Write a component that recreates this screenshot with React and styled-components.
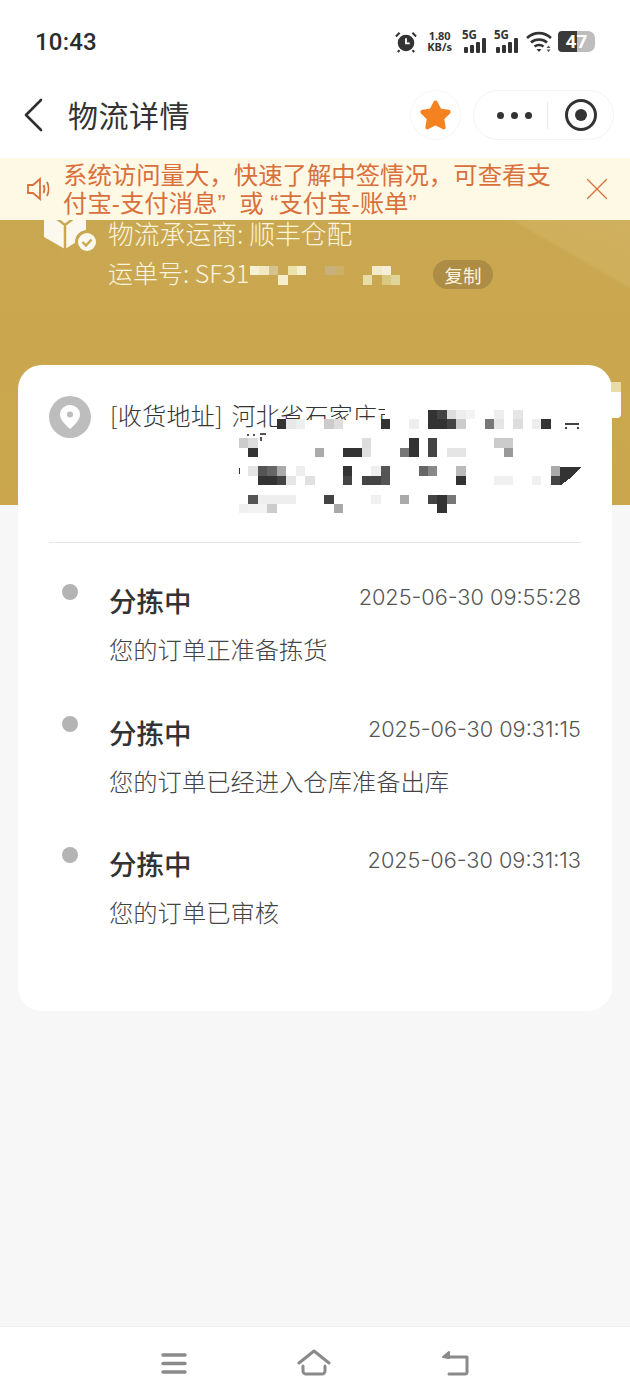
import React from 'react';
import styled, { createGlobalStyle } from 'styled-components';
import { Star, X } from 'lucide-react';

const GlobalStyle = createGlobalStyle`
  html, body {
    margin: 0;
    padding: 0;
    background: #f7f7f7;
  }
  * {
    box-sizing: border-box;
  }
`;

const Page = styled.div`
  width: 630px;
  height: 1400px;
  display: flex;
  flex-direction: column;
  overflow: hidden;
  background: #f7f7f7;
  font-family: 'Noto Sans CJK SC', 'Noto Sans', sans-serif;
  color: #333;
`;

const StatusBar = styled.div`
  height: 75px;
  flex: none;
  display: flex;
  align-items: center;
  justify-content: space-between;
  padding: 8px 35px 0 35px;
  background: #fff;
`;

const Clock = styled.div`
  font-family: Roboto, sans-serif;
  font-size: 24px;
  font-weight: 500;
  letter-spacing: 0.2px;
  color: #2c2c2c;
`;

const StatusIcons = styled.div`
  display: flex;
  align-items: center;
  gap: 6px;
`;

const NetSpeed = styled.div`
  display: flex;
  flex-direction: column;
  align-items: center;
  gap: 1px;
  margin: 0 4px;
  font-family: 'Noto Sans', sans-serif;
  font-size: 11px;
  line-height: 10px;
  font-weight: 700;
  color: #333;
`;

const SignalWrap = styled.div`
  position: relative;
  width: 26px;
  height: 22px;
`;

const SignalLabel = styled.span`
  position: absolute;
  left: 0;
  top: -2px;
  font-family: 'Noto Sans', sans-serif;
  font-size: 11.5px;
  line-height: 12px;
  font-weight: 700;
  color: #333;
`;

const Battery = styled.div`
  width: 37px;
  height: 21px;
  display: flex;
  align-items: center;
  justify-content: center;
  border-radius: 4px 7px 7px 4px;
  background: linear-gradient(90deg, #3a3a3a 0 52%, #bdbdbd 52% 100%);
  font-family: Roboto, sans-serif;
  font-size: 19px;
  font-weight: 700;
  color: #fff;
`;

const NavBar = styled.div`
  height: 83px;
  flex: none;
  display: flex;
  align-items: center;
  padding: 0 16px 3px 24px;
  background: #fff;
`;

const BackIcon = styled.svg`
  flex: none;
  margin-right: 24px;
`;

const NavTitle = styled.div`
  flex: 1;
  margin-top: -2px;
  font-size: 30px;
  letter-spacing: 0.5px;
  color: #333;
`;

const RoundButton = styled.div`
  width: 51px;
  height: 50px;
  display: flex;
  align-items: center;
  justify-content: center;
  margin-right: 12px;
  border: 1px solid #f6f6f6;
  border-radius: 50%;
`;

const Capsule = styled.div`
  width: 141px;
  height: 50px;
  display: flex;
  align-items: center;
  border: 1px solid #f4f4f4;
  border-radius: 25px;
`;

const CapsuleSide = styled.div`
  flex: 1;
  display: flex;
  align-items: center;
  justify-content: center;
  gap: 7px;
`;

const DotsSide = styled(CapsuleSide)`
  padding-left: 8px;
`;

const Dot = styled.span`
  width: 7px;
  height: 7px;
  border-radius: 50%;
  background: #333;
`;

const CapsuleDivider = styled.div`
  width: 1px;
  height: 27px;
  background: #e8e8e8;
`;

const Target = styled.div`
  width: 32px;
  height: 32px;
  display: flex;
  align-items: center;
  justify-content: center;
  border: 3px solid #333;
  border-radius: 50%;
  &::after {
    content: '';
    width: 12px;
    height: 12px;
    border-radius: 50%;
    background: #333;
  }
`;

const Banner = styled.div`
  position: relative;
  height: 347px;
  flex: none;
  padding: 56px 0 0 44px;
  background:
    linear-gradient(30deg, rgba(255, 240, 190, 0) 81.4%, rgba(255, 240, 190, 0.1) 82%, rgba(255, 240, 190, 0.15) 100%),
    linear-gradient(180deg, #c9a852 0%, #cba64c 100%);
`;

const Notice = styled.div`
  position: absolute;
  left: 0;
  right: 0;
  top: 0;
  height: 62px;
  display: flex;
  align-items: center;
  padding: 0 14px 0 25px;
  background: #fef9e5;
  color: #d9703c;
`;

/* Liberation first so the curly quotes come out narrow, Han falls through to Noto */
const NoticeText = styled.div`
  width: 490px;
  margin: 0 auto 0 12px;
  padding-top: 1px;
  font-family: 'Liberation Sans', 'Noto Sans CJK SC', sans-serif;
  font-size: 24.400px;
  line-height: 28px;
`;

const Carrier = styled.div`
  display: flex;
  gap: 16px;
`;

const CarrierIcon = styled.div`
  width: 48px;
  height: 36px;
  flex: none;
`;

const IconSvg = styled.svg`
  overflow: visible;
`;

const CarrierText = styled.div`
  flex: 1;
  font-size: 25.800px;
  font-weight: 300;
  line-height: 38px;
  color: #fbf4df;
`;

const WaybillRow = styled.div`
  position: relative;
  display: flex;
  align-items: center;
  font-size: 25px;
  line-height: 38px;
  margin-top: 1px;
`;

const CopyTag = styled.div`
  position: absolute;
  left: 325px;
  top: 7px;
  width: 60px;
  height: 29px;
  display: flex;
  align-items: center;
  justify-content: center;
  border-radius: 15px;
  background: #ad8d45;
  font-size: 18.500px;
  font-weight: 400;
  color: #fbf4df;
`;

const Card = styled.div`
  position: relative;
  flex: none;
  width: 594px;
  height: 646px;
  margin: -140px 0 0 18px;
  padding: 0 31px;
  border-radius: 24px;
  background: #fff;
`;

const CardEdge = styled.div`
  position: absolute;
  right: -9px;
  top: 17px;
  width: 10px;
  height: 36px;
  border-radius: 0 0 4px 0;
  background: linear-gradient(180deg, #e9dba6 0 10px, #fff 10px);
`;

const AddressRow = styled.div`
  position: relative;
  height: 178px;
  display: flex;
  padding-top: 31px;
  border-bottom: 1px solid #e6e6e6;
`;

const PinCircle = styled.div`
  width: 42px;
  height: 42px;
  flex: none;
  display: flex;
  align-items: center;
  justify-content: center;
  border-radius: 50%;
  background: #bdbdbd;
`;

const AddressText = styled.div`
  margin-left: 19px;
  font-size: 24px;
  font-weight: 300;
  letter-spacing: 0.3px;
  word-spacing: 3px;
  line-height: 38px;
  color: #333;
  white-space: nowrap;
`;

const Mosaic = styled.svg`
  position: absolute;
  display: block;
  overflow: visible;
  shape-rendering: crispEdges;
`;

const AddressMosaic = styled(Mosaic)`
  left: 190px;
  top: 39px;
`;

const WaybillMosaic = styled(Mosaic)`
  left: 142px;
  top: 13px;
`;

const Timeline = styled.div`
  display: flex;
  flex-direction: column;
  padding-top: 30px;
`;

const Step = styled.div`
  position: relative;
  height: 131.500px;
  padding-left: 60px;
`;

const StepDot = styled.span`
  position: absolute;
  left: 13px;
  top: 11px;
  width: 16px;
  height: 16px;
  border-radius: 50%;
  background: #b4b4b4;
`;

const StepHead = styled.div`
  display: flex;
  align-items: flex-start;
  justify-content: space-between;
`;

const StepTitle = styled.div`
  margin-top: 7px;
  font-size: 27.500px;
  line-height: 40px;
  font-weight: 500;
  color: #333;
`;

const StepTime = styled.div`
  margin-top: 4px;
  font-family: Inter, 'Noto Sans', sans-serif;
  font-size: 21.700px;
  font-weight: 300;
  line-height: 40px;
  color: #555;
`;

const StepDesc = styled.div`
  margin-top: 11px;
  font-size: 24.300px;
  font-weight: 300;
  line-height: 36px;
  color: #444;
`;

const Spacer = styled.div`
  flex: 1;
`;

const BottomBar = styled.div`
  height: 74px;
  flex: none;
  display: flex;
  align-items: center;
  justify-content: center;
  gap: 110px;
  border-top: 1px solid #eee;
  background: #fff;
`;

const addressCells = [
  [0, 20, '#333'], [0, 21, '#444'], [0, 22, '#ddd'], [0, 23, '#eee'], [0, 24, '#f3f3f3'], [0, 27, '#eee'], [0, 29, '#e5e5e5'],
  [1, 4, '#333'], [1, 5, '#e8e8e8'], [1, 6, '#eee'], [1, 9, '#ccc'], [1, 10, '#ddd'], [1, 15, '#333'], [1, 18, '#eee'],
  [1, 20, '#333'], [1, 21, '#333'], [1, 22, '#444'], [1, 23, '#ccc'], [1, 26, '#777'], [1, 27, '#e5e5e5'], [1, 29, '#ddd'],
  [1, 31, '#eee'], [1, 32, '#333'],
  [3, 0, '#ccc'], [3, 1, '#ddd'], [3, 13, '#ddd'], [3, 18, '#333'], [3, 20, '#444'], [3, 27, '#ccc'], [3, 28, '#ccc'],
  [4, 1, '#333'], [4, 8, '#aaa'], [4, 11, '#333'], [4, 12, '#333'], [4, 13, '#e0e0e0'], [4, 17, '#777'], [4, 18, '#333'],
  [4, 20, '#444'], [4, 22, '#e5e5e5'], [4, 23, '#e5e5e5'], [4, 28, '#999'],
  [6, 1, '#e5e5e5'], [6, 2, '#555'], [6, 3, '#666'], [6, 4, '#aaa'], [6, 6, '#eee'], [6, 11, '#333'], [6, 14, '#eee'],
  [6, 15, '#555'], [6, 19, '#666'], [6, 20, '#888'], [6, 23, '#bbb'], [6, 33, '#aaa'],
  [7, 2, '#333'], [7, 3, '#333'], [7, 4, '#444'], [7, 5, '#e5e5e5'], [7, 7, '#e0e0e0'], [7, 11, '#444'], [7, 13, '#444'],
  [7, 14, '#444'], [7, 15, '#555'], [7, 23, '#333'], [7, 27, '#f0f0f0'], [7, 28, '#f0f0f0'], [7, 31, '#f0f0f0'],
  [7, 33, '#444'],
  [9, 1, '#555'], [9, 2, '#eee'], [9, 3, '#eee'], [9, 4, '#eee'], [9, 5, '#eee'], [9, 9, '#444'], [9, 14, '#f0f0f0'],
  [9, 17, '#aaa'], [9, 20, '#444'], [9, 21, '#333'], [9, 22, '#777'],
  [10, 0, '#f0f0f0'], [10, 1, '#f3f3f3'], [10, 2, '#f3f3f3'], [10, 3, '#ccc'], [10, 10, '#aaa'], [10, 21, '#333'],
];

const waybillCells = [
  [0, 0, '#f6f1d4'], [0, 1, '#f2e9c2'], [0, 2, '#d6c28e'], [1, 3, '#f5efd0'], [0, 4, '#ece3a8'], [0, 5, '#f5f0d0'],
  [0, 8, '#c8b07c'], [0, 9, '#cdb068'], [0, 13, '#f2eac8'], [0, 14, '#f5efd8'], [1, 12, '#e8dca8'], [1, 14, '#d8c880'],
  [1, 15, '#e0d498'],
];

const steps = [
  { time: '2025-06-30 09:55:28', desc: '您的订单正准备拣货' },
  { time: '2025-06-30 09:31:15', desc: '您的订单已经进入仓库准备出库' },
  { time: '2025-06-30 09:31:13', desc: '您的订单已审核' },
];

function SignalIcon() {
  return (
    <SignalWrap>
      <SignalLabel>5G</SignalLabel>
      <svg width="26" height="22" viewBox="0 0 26 22">
        <rect x="2" y="16" width="4" height="6" rx="1" fill="#333" />
        <rect x="8" y="14" width="4" height="8" rx="1" fill="#333" />
        <rect x="14" y="11" width="4" height="11" rx="1" fill="#333" />
        <rect x="20" y="7" width="4" height="15" rx="1" fill="#333" />
      </svg>
    </SignalWrap>
  );
}

function App() {
  return (
    <Page>
      <GlobalStyle />
      <StatusBar>
        <Clock>10:43</Clock>
        <StatusIcons>
          <svg width="22" height="24" viewBox="0 0 24 24">
            <circle cx="12" cy="13" r="9" fill="#333" />
            <path d="M12 8v5.500h4" stroke="#fff" strokeWidth="2" fill="none" />
            <path d="M1 6l4-4M23 6l-4-4M5 21l-2 2M19 21l2 2" stroke="#333" strokeWidth="2.200" />
          </svg>
          <NetSpeed>
            <span>1.80</span>
            <span>KB/s</span>
          </NetSpeed>
          <SignalIcon />
          <SignalIcon />
          <svg width="26" height="22" viewBox="0 0 26 22">
            <path d="M1 7c7-6.500 17-6.500 24 0M5 11.500c4.500-4 11.500-4 16 0M8.500 15.500c2.500-2 6.500-2 9 0" stroke="#333" strokeWidth="2.600" fill="none" />
            <path d="M10.500 18h5L13 21z" fill="#333" />
            <path d="M20.500 17l2-2.500 2 2.500zM20.500 18.500l2 2.500 2-2.500z" fill="#555" />
          </svg>
          <Battery>47</Battery>
        </StatusIcons>
      </StatusBar>

      <NavBar>
        <BackIcon width="20" height="34" viewBox="0 0 20 34" fill="none" stroke="#2f2f2f" strokeWidth="2.600" strokeLinecap="round" strokeLinejoin="round">
          <path d="M17 2L2 17l15 15" />
        </BackIcon>
        <NavTitle>物流详情</NavTitle>
        <RoundButton>
          <Star size={33} fill="#f58220" color="#f58220" strokeWidth={2} />
        </RoundButton>
        <Capsule>
          <DotsSide>
            <Dot />
            <Dot />
            <Dot />
          </DotsSide>
          <CapsuleDivider />
          <CapsuleSide>
            <Target />
          </CapsuleSide>
        </Capsule>
      </NavBar>

      <Banner>
        <Carrier>
          <CarrierIcon>
            <IconSvg width="48" height="36" viewBox="0 0 48 36">
              <path d="M0 0h42v22L21 35 0 23z" fill="#fbf8ee" />
              <path d="M4 -2l17 13 17-13M21 11v24" stroke="#c9a852" strokeWidth="2.500" fill="none" />
              <circle cx="43" cy="28" r="12" fill="#c9a852" />
              <circle cx="43" cy="28" r="9" fill="#fbf8ee" />
              <path d="M38.500 28l3.500 3.500 5.500-6" stroke="#c9a852" strokeWidth="2.400" fill="none" />
            </IconSvg>
          </CarrierIcon>
          <CarrierText>
            <div>物流承运商: 顺丰仓配</div>
            <WaybillRow>
              <span>运单号: SF31</span>
              <WaybillMosaic width="152" height="19" viewBox="0 0 152 19">
                {waybillCells.map(([row, col, fill]) => (
                  <rect key={`${row}-${col}`} x={col * 9.4} y={row * 9.4} width="9.4" height="9.4" fill={fill} />
                ))}
              </WaybillMosaic>
              <CopyTag>复制</CopyTag>
            </WaybillRow>
          </CarrierText>
        </Carrier>
        <Notice>
          <svg width="26" height="24" viewBox="0 0 26 24" fill="none" stroke="#d9703c" strokeWidth="1.800">
            <path d="M3 8h5l7-6v20l-7-6H3z" />
            <path d="M18.500 8c1.200 2.500 1.200 5.500 0 8M22 5c2 4 2 10 0 14" />
          </svg>
          <NoticeText>
            {'系统访问量大，快速了解中签情况，可查看支付宝-支付消息”\u00a0\u00a0或\u00a0“支付宝-账单”'}
          </NoticeText>
          <X size={38} strokeWidth={0.8} color="#d9703c" />
        </Notice>
      </Banner>

      <Card>
        <CardEdge />
        <AddressRow>
          <PinCircle>
            <svg width="20" height="24" viewBox="0 0 20 24">
              <path d="M10 0C4.500 0 0 4.300 0 9.600 0 15 6 20.500 10 24c4-3.500 10-9 10-14.400C20 4.300 15.500 0 10 0z" fill="#fff" />
              <circle cx="10" cy="9.500" r="3" fill="#bdbdbd" />
            </svg>
          </PinCircle>
          <AddressText>[收货地址] 河北省石家庄市</AddressText>
          <AddressMosaic width="343" height="110" viewBox="0 -6 343 110">
            <rect x="146" y="-6" width="197" height="16" fill="#fff" />
            <rect x="38" y="10" width="305" height="10" fill="#fff" />
            <rect x="0" y="20" width="343" height="84" fill="#fff" />
            {addressCells.map(([row, col, fill]) => (
              <rect key={`${row}-${col}`} x={col * 9.45} y={row * 9.4} width="9.45" height="9.4" fill={fill} />
            ))}
            <path d="M321 57h21l-8 9-12 9h-1z" fill="#333" />
            <path d="M8 24h2v2H8zM14 24h2v2h-2zM21 23h6v2h-6zM21 27h2v4h-2z" fill="#555" />
            <path d="M0 58h1v6H0z" fill="#333" />
            <path d="M326 13h14v1.500h-14zM326 16.500h2v2h-2zM338 16.500h2v2h-2z" fill="#444" />
          </AddressMosaic>
        </AddressRow>
        <Timeline>
          {steps.map((step) => (
            <Step key={step.time}>
              <StepDot />
              <StepHead>
                <StepTitle>分拣中</StepTitle>
                <StepTime>{step.time}</StepTime>
              </StepHead>
              <StepDesc>{step.desc}</StepDesc>
            </Step>
          ))}
        </Timeline>
      </Card>

      <Spacer />

      <BottomBar>
        <svg width="26" height="22" viewBox="0 0 26 22" fill="none" stroke="#8a8a8a" strokeWidth="3.400" strokeLinecap="round">
          <path d="M2 2h22M2 10.500h22M2 19h22" />
        </svg>
        <svg width="34" height="30" viewBox="0 0 34 30" fill="none" stroke="#8a8a8a" strokeWidth="3" strokeLinecap="round" strokeLinejoin="round">
          <path d="M2 14L17 2l15 12M6 17v5a3 3 0 0 0 3 3h16a3 3 0 0 0 3-3v-5" />
        </svg>
        <svg width="28" height="30" viewBox="0 0 28 30" fill="none" stroke="#8a8a8a" strokeWidth="3" strokeLinecap="round" strokeLinejoin="round">
          <path d="M6 8h20v15a2 2 0 0 1-2 2H8" />
          <path d="M8 3L2 8l6 1z" fill="#8a8a8a" strokeWidth="2" />
        </svg>
      </BottomBar>
    </Page>
  );
}

export default App;
